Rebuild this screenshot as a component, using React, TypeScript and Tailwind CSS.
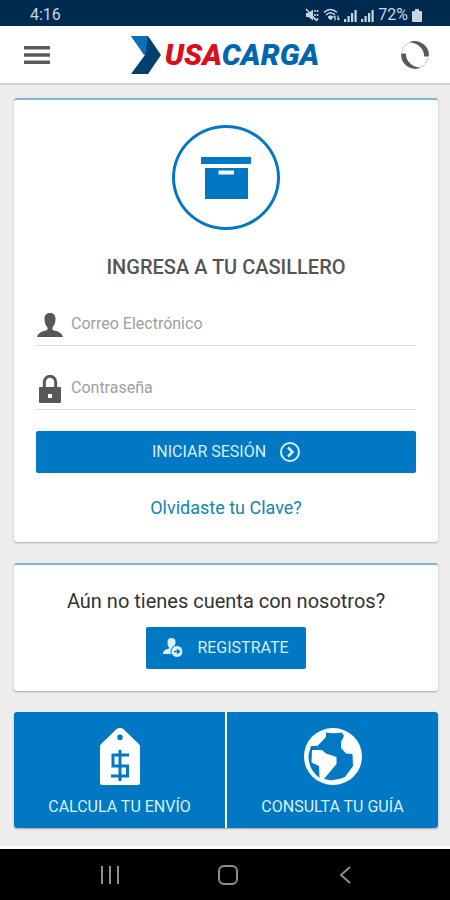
import type { ReactNode } from "react";

type IconProps = { className?: string };

const MutedIcon = () => (
  <svg viewBox="0 0 14 14" className="h-[14px] w-[14px]" fill="none" stroke="currentColor">
    <path d="M1 5h2.500L8 1.500v11L3.500 9H1z" fill="currentColor" stroke="none" />
    <path d="M10 2v2M12.500 2v2M10 6v2M12.500 6v2M10 10v2M12.500 10v2" strokeWidth="1.500" />
    <path d="M1 1l11 12" strokeWidth="1.500" />
  </svg>
);

const WifiIcon = () => (
  <svg viewBox="0 0 17 14" className="h-[14px] w-[17px]" fill="none" stroke="currentColor" strokeWidth="1.500">
    <path d="M1 4.500Q7.500-1.500 14 4.500" />
    <path d="M3 7Q7.500 2.500 12 7" />
    <path d="M5 9Q7.500 6.500 10 9L7.500 12z" fill="currentColor" strokeWidth="1" />
    <path d="M12 12.500V8M10.500 9.500L12 8M15 7.500V12M16.500 10.500L15 12" strokeWidth="1.200" />
  </svg>
);

const SignalIcon = () => (
  <svg viewBox="0 0 13 13" className="h-[13px] w-[13px]" fill="currentColor">
    <path d="M0 10h2.200v3H0zM3.500 7h2.200v6H3.500zM7 4h2.200v9H7zM10.500 1h2.200v12h-2.200z" />
  </svg>
);

const BatteryIcon = () => (
  <svg viewBox="0 0 10 13" className="h-[13px] w-[10px]" fill="currentColor">
    <path d="M3 0h4v2h2a1 1 0 0 1 1 1v9a1 1 0 0 1-1 1H1a1 1 0 0 1-1-1V3a1 1 0 0 1 1-1h2z" />
  </svg>
);

const MenuIcon = () => (
  <svg viewBox="0 0 26 18" className="h-[18px] w-[26px]" fill="#5a5a5a">
    <path d="M0 0h26v3.400H0zM0 7.300h26v3.400H0zM0 14.600h26V18H0z" />
  </svg>
);

const RefreshIcon = () => (
  <svg viewBox="0 0 30 30" className="h-[30px] w-[30px]" fill="#595959">
    <path d="M9 2.500A14 14 0 0 1 28.800 16.500h-4.600C24 8 17.500 2.800 9 2.500z" />
    <path d="M21 27.500A14 14 0 0 1 1.200 13.500h4.600C6 22 12.500 27.200 21 27.500z" />
    <path d="M1.800 12Q3.500 5 9.500 2.500M28.200 18Q26.500 25 20.500 27.500" fill="none" stroke="#c4c4c4" />
  </svg>
);

const LogoMark = () => (
  <svg viewBox="0 0 30 38" className="h-[38px] w-[30px]">
    <path d="M0 0h17L30 19 17 38H0l14-19z" fill="#003f6e" />
    <path d="M0 0h17l-2.500 18.500L13 19z" fill="#0871b8" />
  </svg>
);

const BoxIcon = () => (
  <svg viewBox="0 0 50 42" className="h-[42px] w-[50px]" fill="#0078c3">
    <path d="M0 0h50v7H0z" />
    <path fillRule="evenodd" d="M4 11h43v31H4zM17.500 13.500v4h15.500v-4z" />
  </svg>
);

const UserIcon = () => (
  <svg viewBox="0 0 26 24" className="h-[24px] w-[26px]" fill="#585858">
    <path d="M13 0c4 0 5.500 2.500 5.500 6 0 4-1.500 7-3 8.500v2.500c5 1.300 9.500 2.500 10.500 7H0c1-4.500 5.500-5.700 10.500-7v-2.500C9 13 7.500 10 7.500 6c0-3.500 1.500-6 5.500-6z" />
  </svg>
);

const LockIcon = () => (
  <svg viewBox="0 0 22 28" className="h-[28px] w-[26px]" fill="#585858">
    <path d="M5.300 13V7a5.700 5.700 0 0 1 11.400 0v6" fill="none" stroke="#585858" strokeWidth="3" />
    <path fillRule="evenodd" d="M1 12h20q1 0 1 1v14q0 1-1 1H1q-1 0-1-1V13q0-1 1-1zM9 19v4h4v-4z" />
  </svg>
);

const ArrowCircleIcon = () => (
  <svg viewBox="0 0 20 20" className="h-[20px] w-[20px]" fill="none" stroke="currentColor" strokeWidth="2">
    <circle cx="10" cy="10" r="9" />
    <path d="M8 5.500l4.500 4.500L8 14.500" strokeWidth="2.500" />
  </svg>
);

const UserAddIcon = () => (
  <svg viewBox="0 0 20 20" className="h-[20px] w-[20px]" fill="currentColor">
    <path d="M8.500 0Q12.500 0 12.500 4c0 3-1 4-1.500 5.500v1L8 16H0c0-3.500 2.500-4.500 6-5.500v-1C5 8 4.500 7 4.500 4q0-4 4-4z" />
    <circle cx="14" cy="13.500" r="6" stroke="#0078c3" />
    <path d="M11 12.700h3v-2.200l3.500 3-3.500 3v-2.200h-3z" fill="#0078c3" />
  </svg>
);

const PriceTagIcon = () => (
  <svg viewBox="0 0 40 57" className="h-[57px] w-[40px]">
    <path
      fill="#fff"
      fillRule="evenodd"
      d="M17 .7q3-1.500 6 0L39 16q1 1 1 3v36q0 2-2 2H2q-2 0-2-2V19q0-2 1-3zM20 6.500a2.800 2.800 0 1 0 0 5.600 2.800 2.800 0 1 0 0-5.600z"
    />
    <path d="M29 27H13v11h14.500v10H11M20 22v31" fill="none" stroke="#0078c3" strokeWidth="3" />
  </svg>
);

const GlobeIcon = () => (
  <svg viewBox="0 0 58 57" className="h-[57px] w-[58px]">
    <ellipse cx="29" cy="28.500" rx="29" ry="28.500" fill="#fff" />
    <path
      fill="#0078c3"
      d="M22 4.500Q30 6 38 4.500L40 8l-3 6v6l5 5.500 6.500.500.500 12-8 11Q30 54 20 51l12.500-15V29L22 25.500 18 22H8l-.500 12.500L15 38l.500 12Q4 41 4.500 27L7 18h6.500L22 9z"
    />
  </svg>
);

const Card = ({ className = "", children }: IconProps & { children: ReactNode }) => (
  <section
    className={`flex flex-col items-center rounded-[3px] border-t-2 border-[#80b8d2] bg-white px-[22px] shadow-[0_1px_2px_rgba(0,0,0,0.3)] ${className}`}
  >
    {children}
  </section>
);

type FieldProps = {
  id: string;
  type: string;
  label: string;
  icon: ReactNode;
};

const Field = ({ id, type, label, icon }: FieldProps) => (
  <div className="flex h-11 w-full items-center gap-2 border-b border-[#dcdcdc]">
    <label htmlFor={id} aria-label={label} className="pl-px pt-[2px]">
      {icon}
    </label>
    <input
      id={id}
      type={type}
      placeholder={label}
      className="min-w-0 flex-1 bg-transparent text-[16px] text-gray-700 outline-none placeholder:text-[#a0a0a0]"
    />
  </div>
);

const Tile = ({ icon, text }: { icon: ReactNode; text: string }) => (
  <a href="#" className="flex flex-1 flex-col items-center gap-3 bg-[#0078c3] pb-[11px] pt-4">
    {icon}
    <span className="text-[16px] leading-5">{text}</span>
  </a>
);

const StatusBar = () => (
  <div className="flex h-[26px] items-center justify-between bg-[#012a50] pl-[30px] pr-[28px] pt-1 text-[#c9d6e2]">
    <span className="text-[16px] leading-5">4:16</span>
    <div className="flex items-center gap-1">
      <MutedIcon />
      <WifiIcon />
      <SignalIcon />
      <SignalIcon />
      <span className="text-[16px] leading-5">72%</span>
      <BatteryIcon />
    </div>
  </div>
);

const Header = () => (
  <header className="flex h-[59px] items-center justify-between border-b-2 border-[#d2d2d2] bg-white pl-6 pr-5">
    <button type="button" aria-label="Menú">
      <MenuIcon />
    </button>
    <div className="flex items-center gap-1">
      <LogoMark />
      <span className="text-[30px] font-black italic leading-9 text-[#0067ae]">
        <span className="text-[#d90f1c]">USA</span>CARGA
      </span>
    </div>
    <button type="button" aria-label="Actualizar">
      <RefreshIcon />
    </button>
  </header>
);

const NavBar = () => (
  <nav className="flex h-[54px] items-center justify-between border-t-[3px] border-white bg-black pl-[100px] pr-[98px]">
    <button type="button" aria-label="Recientes">
      <svg viewBox="0 0 20 18" className="h-[18px] w-[20px]" stroke="#8d8d8d" strokeWidth="2">
        <path d="M2 0v18M10 0v18M18 0v18" />
      </svg>
    </button>
    <button type="button" aria-label="Inicio">
      <svg viewBox="0 0 20 20" className="h-[20px] w-[20px]" fill="none" stroke="#8d8d8d" strokeWidth="2">
        <rect x="1" y="1" width="18" height="18" rx="5" />
      </svg>
    </button>
    <button type="button" aria-label="Atrás">
      <svg viewBox="0 0 16 18" className="h-[18px] w-[16px]" fill="none" stroke="#8d8d8d" strokeWidth="2">
        <path d="M14 1L5 9l9 8" />
      </svg>
    </button>
  </nav>
);

const App = () => {
  return (
    <div className="flex min-h-screen flex-col bg-[#ededed] font-['Roboto',sans-serif]">
      <StatusBar />
      <Header />

      <main className="flex flex-1 flex-col gap-[21px] pl-[14px] pr-3 pt-[13px]">
        {/* Inicio de sesión */}
        <Card className="pb-[22px] pt-[25px]">
          <div className="flex h-[105px] w-[108px] items-center justify-center rounded-[50%] border-[3px] border-[#0078c3]">
            <BoxIcon />
          </div>
          <h1 className="mt-[23px] text-[20px] font-medium leading-7 text-[#555]">INGRESA A TU CASILLERO</h1>
          <form className="mt-[21px] flex w-full flex-col" onSubmit={(e) => e.preventDefault()}>
            <div className="flex flex-col gap-5">
              <Field id="email" type="email" label="Correo Electrónico" icon={<UserIcon />} />
              <Field id="password" type="password" label="Contraseña" icon={<LockIcon />} />
            </div>
            <button
              type="submit"
              className="mt-[21px] flex h-[42px] items-center justify-center gap-[14px] rounded-[2px] bg-[#0078c3] text-[16px] text-[#d9f0fc]"
            >
              INICIAR SESIÓN
              <ArrowCircleIcon />
            </button>
          </form>
          <a href="#" className="mt-[23px] text-[18px] leading-6 text-[#1683b0]">
            Olvidaste tu Clave?
          </a>
        </Card>

        {/* Registro */}
        <Card className="pb-[22px] pt-6">
          <p className="text-[20px] leading-6 text-[#333]">Aún no tienes cuenta con nosotros?</p>
          <button
            type="button"
            className="mt-[14px] flex h-[42px] w-40 items-center justify-center gap-[14px] rounded-[2px] bg-[#0078c3] text-[16px] text-[#d9f0fc]"
          >
            <UserAddIcon />
            REGISTRATE
          </button>
        </Card>

        {/* Accesos rápidos */}
        <div className="flex gap-[2px] overflow-hidden rounded-[3px] bg-white text-[#d9f0fc] shadow-[0_1px_2px_rgba(0,0,0,0.3)]">
          <Tile icon={<PriceTagIcon />} text="CALCULA TU ENVÍO" />
          <Tile icon={<GlobeIcon />} text="CONSULTA TU GUÍA" />
        </div>
      </main>

      <NavBar />
    </div>
  );
};

export default App;
